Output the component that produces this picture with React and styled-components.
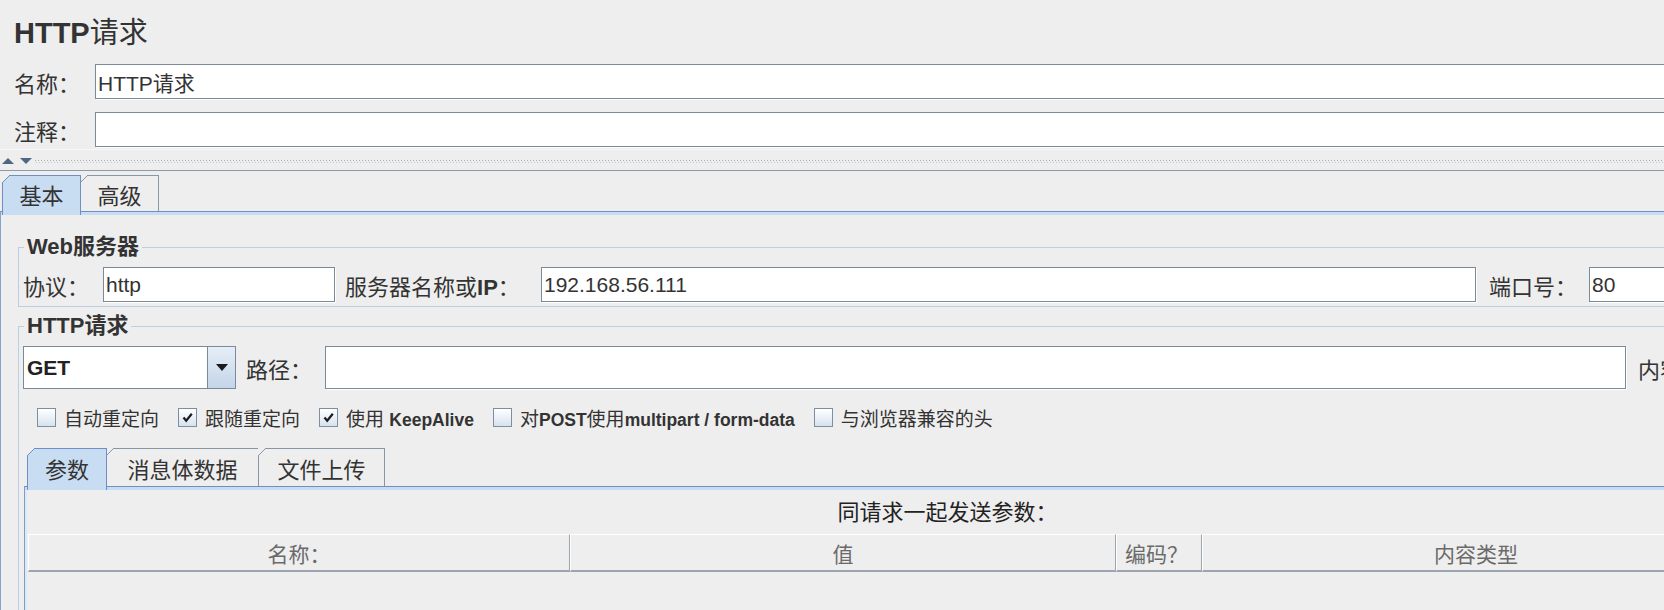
import React from 'react';
import styled, { createGlobalStyle } from 'styled-components';

const FONT = `"Liberation Sans", "Noto Sans CJK SC", sans-serif`;

const GlobalStyle = createGlobalStyle`
    html, body {
        margin: 0;
        padding: 0;
        background: #eeeeee;
        overflow: hidden;
    }
    body {
        font-family: ${FONT};
        color: #333;
    }
`;

const Page = styled.div`
    width: 1772px;
    height: 610px;
    overflow: hidden;
`;

const Header = styled.div`
    padding: 16px 0 0 14px;
`;

const Title = styled.h1`
    margin: 0;
    font-size: 29px;
    line-height: 34px;
    font-weight: normal;
    color: #333;

    b {
        font-weight: bold;
    }
`;

const FieldRow = styled.div`
    display: flex;
    align-items: center;
    height: ${p => p.$h || 35}px;
    margin-top: ${p => p.$mt || 0}px;
`;

const RowLabel = styled.span`
    flex: none;
    width: ${p => p.$w}px;
    margin-left: ${p => p.$ml || 0}px;
    font-size: 22px;
    color: #333;
    white-space: nowrap;
    overflow: hidden;

    b {
        font-weight: bold;
    }
`;

const TextBox = styled.input`
    box-sizing: border-box;
    height: 100%;
    width: ${p => (p.$w ? `${p.$w}px` : 'auto')};
    flex: ${p => (p.$w ? 'none' : '1')};
    min-width: 0;
    margin: 0;
    border: 1px solid #7a8a99;
    box-shadow: 1px 1px 0 #ffffff;
    background: #ffffff;
    padding: 0 2px;
    font: 21px ${FONT};
    color: #333;
    outline: none;
`;

const SplitBar = styled.div`
    box-sizing: border-box;
    height: 22px;
    margin-top: 2px;
    border-top: 1px solid #f8f8f8;
    border-bottom: 1px solid #8d9aa7;
    display: flex;
    align-items: center;
    gap: 3px;
    padding: 3px 0 0 2px;
`;

const Dots = styled.div`
    flex: 1;
    height: 3px;
    background-image:
        linear-gradient(90deg, #a9b2bb 1px, transparent 1px),
        linear-gradient(90deg, transparent 1px, #c2c9d0 1px, #c2c9d0 2px, transparent 2px);
    background-size: 3px 1px, 3px 1px;
    background-position: 0 0, 0 2px;
    background-repeat: repeat-x;
`;

const TabStrip = styled.div`
    display: flex;
    align-items: flex-start;
    height: ${p => p.$h}px;
    margin-top: ${p => p.$mt || 0}px;
    padding-left: ${p => p.$pl || 0}px;
`;

const Tab = styled.div`
    position: relative;
    z-index: ${p => (p.$active ? 2 : 1)};
    box-sizing: border-box;
    width: ${p => p.$w}px;
    height: ${p => (p.$active ? p.$h + 4 : p.$h)}px;
    margin-left: -1px;
    padding-bottom: ${p => (p.$active ? 4 : 0)}px;
    display: flex;
    align-items: center;
    justify-content: center;
    font-size: 22px;
    color: #333;
    border: 1px solid ${p => (p.$active ? '#6d8fc6' : '#8797a8')};
    border-bottom: none;
    background: ${p => (p.$active ? '#c8ddf2' : 'transparent')};

    &:first-child {
        margin-left: 0;
    }

    &::before {
        content: '';
        position: absolute;
        left: -1px;
        top: -1px;
        width: 8px;
        height: 8px;
        background: linear-gradient(
            135deg,
            #eeeeee 0,
            #eeeeee calc(50% - 0.6px),
            ${p => (p.$active ? '#6d8fc6' : '#8797a8')} calc(50% - 0.6px),
            ${p => (p.$active ? '#6d8fc6' : '#8797a8')} calc(50% + 0.6px),
            transparent calc(50% + 0.6px)
        );
    }
`;

const OuterPanel = styled.div`
    border-top: 1px solid #6d8fc6;
    border-left: 1px solid #8aa2c6;
    box-shadow: inset 0 3px 0 #c8ddf2;
    padding: 0 8px 0 17px;
    height: 600px;
`;

const Group = styled.fieldset`
    margin: ${p => p.$mt}px 0 0;
    padding: 8px 4px 4px;
    border: 1px solid #b8cfe5;
    min-width: 0;
`;

const GroupTitle = styled.legend`
    padding: 0 3px;
    margin-left: 1px;
    font: bold 22px/24px ${FONT};
    color: #333;
`;

const Combo = styled.div`
    flex: none;
    box-sizing: border-box;
    display: flex;
    width: 213px;
    height: 100%;
    border: 1px solid #7a8a99;
    background: #ffffff;
`;

const ComboValue = styled.div`
    flex: 1;
    display: flex;
    align-items: center;
    padding-left: 3px;
    font: bold 21px ${FONT};
    color: #222;
`;

const ComboButton = styled.div`
    width: 27px;
    border-left: 1px solid #7a8a99;
    background: linear-gradient(#e6eef7, #c3d5e9);
    display: flex;
    align-items: center;
    justify-content: center;
`;

const CheckRow = styled.div`
    display: flex;
    align-items: center;
    gap: 19px;
    height: 24px;
    margin-top: 16px;
    padding-left: 14px;
`;

const CheckItem = styled.label`
    display: flex;
    align-items: center;
    gap: 8px;
    font-size: 19px;
    color: #333;
    white-space: nowrap;
`;

const CheckText = styled.span`
    b {
        font-weight: bold;
        font-size: 17.5px;
    }
`;

const Box = styled.span`
    box-sizing: border-box;
    width: 19px;
    height: 19px;
    border: 1px solid #7d8ea0;
    background: linear-gradient(#ffffff, #d6e2ef);
    display: flex;
    align-items: center;
    justify-content: center;
`;

const InnerArea = styled.div`
    margin-left: 1px;
`;

const InnerPanel = styled.div`
    border-top: 1px solid #6d8fc6;
    border-left: 1px solid #7f9bc8;
    box-shadow: inset 0 3px 0 #c8ddf2, inset 2px 0 0 #dde8f4;
    padding: 0 0 0 3px;
    height: 160px;
`;

const Caption = styled.div`
    margin-top: 13px;
    padding-left: 108px;
    text-align: center;
    font-size: 22px;
    line-height: 26px;
    color: #222;
`;

const HeadGrid = styled.div`
    display: grid;
    grid-template-columns: 542px 546px 86px 548px;
    height: 38px;
    margin-top: 8px;
`;

const HeadCell = styled.div`
    box-sizing: border-box;
    display: flex;
    align-items: center;
    justify-content: ${p => (p.$left ? 'flex-start' : 'center')};
    padding-left: ${p => (p.$left ? 8 : 0)}px;
    border-top: 1px solid #ffffff;
    border-left: 1px solid #ffffff;
    border-right: 1px solid #9aa5b0;
    border-bottom: 2px solid #9aa5b0;
    font-size: 21px;
    color: #6a6a6a;
`;

const Arrows = () => (
    <svg width="30" height="7" viewBox="0 0 30 7">
        <path d="M0 6 L6 0 L12 6 Z" fill="#4f6680" />
        <path d="M18 0 H30 L24 6 Z" fill="#4f6680" />
    </svg>
);

const Check = ({ on }) => (
    <Box>
        {on && (
            <svg width="11" height="11" viewBox="0 0 11 11">
                <path d="M1.5 5.5 L4.2 8.8 L9.8 1.8" stroke="#1d1d1d" strokeWidth="2.2" fill="none" />
            </svg>
        )}
    </Box>
);

const App = () => (
    <Page>
        <GlobalStyle />
        <Header>
            <Title><b>HTTP</b>请求</Title>
            <FieldRow $mt={14}>
                <RowLabel $w={81}>名称：</RowLabel>
                <TextBox readOnly defaultValue="HTTP请求" />
            </FieldRow>
            <FieldRow $mt={13}>
                <RowLabel $w={81}>注释：</RowLabel>
                <TextBox readOnly defaultValue="" />
            </FieldRow>
        </Header>

        <SplitBar>
            <Arrows />
            <Dots />
        </SplitBar>

        <TabStrip $h={36} $mt={4} $pl={2}>
            <Tab $w={79} $h={36} $active>基本</Tab>
            <Tab $w={79} $h={36}>高级</Tab>
        </TabStrip>

        <OuterPanel>
            <Group $mt={23}>
                <GroupTitle>Web服务器</GroupTitle>
                <FieldRow>
                    <RowLabel $w={80}>协议：</RowLabel>
                    <TextBox $w={232} readOnly defaultValue="http" />
                    <RowLabel $w={196} $ml={10}>服务器名称或<b>IP</b>：</RowLabel>
                    <TextBox readOnly defaultValue="192.168.56.111" />
                    <RowLabel $w={100} $ml={13}>端口号：</RowLabel>
                    <TextBox $w={170} readOnly defaultValue="80" />
                </FieldRow>
            </Group>

            <Group $mt={7}>
                <GroupTitle>HTTP请求</GroupTitle>
                <FieldRow $h={43}>
                    <Combo>
                        <ComboValue>GET</ComboValue>
                        <ComboButton>
                            <svg width="12" height="7" viewBox="0 0 12 7">
                                <path d="M0 0 H12 L6 7 Z" fill="#1a1a1a" />
                            </svg>
                        </ComboButton>
                    </Combo>
                    <RowLabel $w={79} $ml={10}>路径：</RowLabel>
                    <TextBox readOnly defaultValue="" />
                    <RowLabel $w={121} $ml={12}>内容编码：</RowLabel>
                </FieldRow>

                <CheckRow>
                    <CheckItem><Check /><CheckText>自动重定向</CheckText></CheckItem>
                    <CheckItem><Check on /><CheckText>跟随重定向</CheckText></CheckItem>
                    <CheckItem><Check on /><CheckText>使用 <b>KeepAlive</b></CheckText></CheckItem>
                    <CheckItem><Check /><CheckText>对<b>POST</b>使用<b>multipart / form-data</b></CheckText></CheckItem>
                    <CheckItem><Check /><CheckText>与浏览器兼容的头</CheckText></CheckItem>
                </CheckRow>

                <InnerArea>
                    <TabStrip $h={38} $mt={19} $pl={3}>
                        <Tab $w={80} $h={38} $active>参数</Tab>
                        <Tab $w={153} $h={38}>消息体数据</Tab>
                        <Tab $w={127} $h={38}>文件上传</Tab>
                    </TabStrip>
                    <InnerPanel>
                        <Caption>同请求一起发送参数：</Caption>
                        <HeadGrid>
                            <HeadCell>名称：</HeadCell>
                            <HeadCell>值</HeadCell>
                            <HeadCell $left>编码？</HeadCell>
                            <HeadCell>内容类型</HeadCell>
                        </HeadGrid>
                    </InnerPanel>
                </InnerArea>
            </Group>
        </OuterPanel>
    </Page>
);

export default App;
